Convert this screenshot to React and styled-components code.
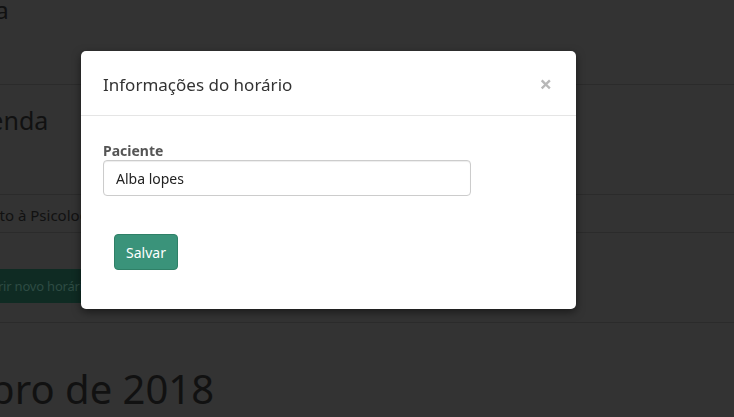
import React from "react";
import styled, { createGlobalStyle } from "styled-components";

const GlobalStyle = createGlobalStyle`
  html, body {
    margin: 0;
    padding: 0;
    background: #333333;
    overflow: hidden;
  }
  body {
    font-family: "Noto Sans", "Open Sans", sans-serif;
  }
`;

const Page = styled.div`
  width: 734px;
  height: 417px;
  background: #333333;
  color: #111111;
  overflow: hidden;
`;

const Brand = styled.div`
  height: 89px;
  margin-top: -4px;
  box-sizing: border-box;
  border-bottom: 1px solid #2b2b2b;
  font-size: 24px;
  line-height: 28px;
  color: #111111;
  white-space: nowrap;
  span {
    display: inline-block;
    margin-left: ${({ offset }) => offset}px;
  }
`;

const Heading = styled.h1`
  margin: 0;
  margin-top: ${({ top }) => top || 0}px;
  margin-left: ${({ offset }) => offset}px;
  font-weight: 400;
  font-size: ${({ size }) => size}px;
  line-height: ${({ lh }) => lh}px;
  color: #111111;
  white-space: nowrap;
`;

const Row = styled.div`
  height: ${({ h }) => h}px;
  box-sizing: border-box;
  border-bottom: 1px solid #2b2b2b;
  display: flex;
  align-items: center;
  padding-top: 2px;
  font-size: 15px;
  color: #111111;
  white-space: nowrap;
  span {
    margin-left: ${({ offset }) => offset || 0}px;
  }
`;

const ButtonRow = styled.div`
  height: 90px;
  box-sizing: border-box;
  border-bottom: 1px solid #2b2b2b;
  padding-top: 36px;
`;

const GhostButton = styled.div`
  display: inline-flex;
  align-items: center;
  height: 34px;
  padding: 0 12px;
  background: #0f2b23;
  color: #2e4c44;
  font-size: 13px;
  letter-spacing: -0.2px;
  border-radius: 4px;
  white-space: nowrap;
  margin-left: ${({ offset }) => offset}px;
`;

const Backdrop = styled.div`
  position: fixed;
  inset: 0;
  padding: 51px 0 0 81px;
`;

const Modal = styled.div`
  width: 495px;
  background: #ffffff;
  border-radius: 5px;
  box-shadow: 0 3px 9px rgba(0, 0, 0, 0.5);
  color: #333333;
`;

const ModalHeader = styled.div`
  height: 65px;
  box-sizing: border-box;
  padding: 0 22px;
  display: flex;
  align-items: center;
  justify-content: space-between;
  border-bottom: 1px solid #e5e5e5;
`;

const Title = styled.h4`
  margin: 0;
  font-weight: 400;
  font-size: 17px;
  color: #333333;
  padding-top: 2px;
`;

const Close = styled.button`
  border: 0;
  background: none;
  padding: 0;
  margin-right: 2px;
  color: #b8b8b8;
  font-size: 22px;
  line-height: 1;
  font-weight: 700;
  font-family: inherit;
  cursor: pointer;
`;

const ModalBody = styled.div`
  padding: 26px 22px 39px;
`;

const Label = styled.label`
  display: block;
  margin-bottom: 1px;
  font-weight: 700;
  font-size: 14px;
  line-height: 17px;
  color: #555555;
`;

const Input = styled.input`
  display: block;
  box-sizing: border-box;
  width: 368px;
  height: 36px;
  padding: 0 12px;
  border: 1px solid #cccccc;
  border-radius: 4px;
  box-shadow: inset 0 1px 1px rgba(0, 0, 0, 0.075);
  font-family: inherit;
  font-size: 14px;
  color: #222222;
  outline: none;
`;

const SaveButton = styled.button`
  margin: 38px 0 0 11px;
  width: 64px;
  height: 36px;
  border: 1px solid #2f8067;
  border-radius: 4px;
  background: #3a937a;
  color: #ffffff;
  font-family: inherit;
  font-size: 14px;
  cursor: pointer;
`;

export default function App() {
  return (
    <>
      <GlobalStyle />
      <Page>
        <Brand offset={-78}>
          <span>Agenda</span>
        </Brand>
        <Heading size={25} lh={70} offset={-42}>
          Agenda
        </Heading>
        <Row h={40} />
        <Row h={38} offset={-78}>
          <span>Atendimento à Psicologia</span>
        </Row>
        <ButtonRow>
          <GhostButton offset={-30}>Abrir novo horário</GhostButton>
        </ButtonRow>
        <Heading size={40} lh={80} top={26} offset={-105}>
          Outubro de 2018
        </Heading>
      </Page>
      <Backdrop>
        <Modal>
          <ModalHeader>
            <Title>Informações do horário</Title>
            <Close aria-label="Fechar">×</Close>
          </ModalHeader>
          <ModalBody>
            <Label htmlFor="paciente">Paciente</Label>
            <Input id="paciente" defaultValue="Alba lopes" />
            <SaveButton>Salvar</SaveButton>
          </ModalBody>
        </Modal>
      </Backdrop>
    </>
  );
}
